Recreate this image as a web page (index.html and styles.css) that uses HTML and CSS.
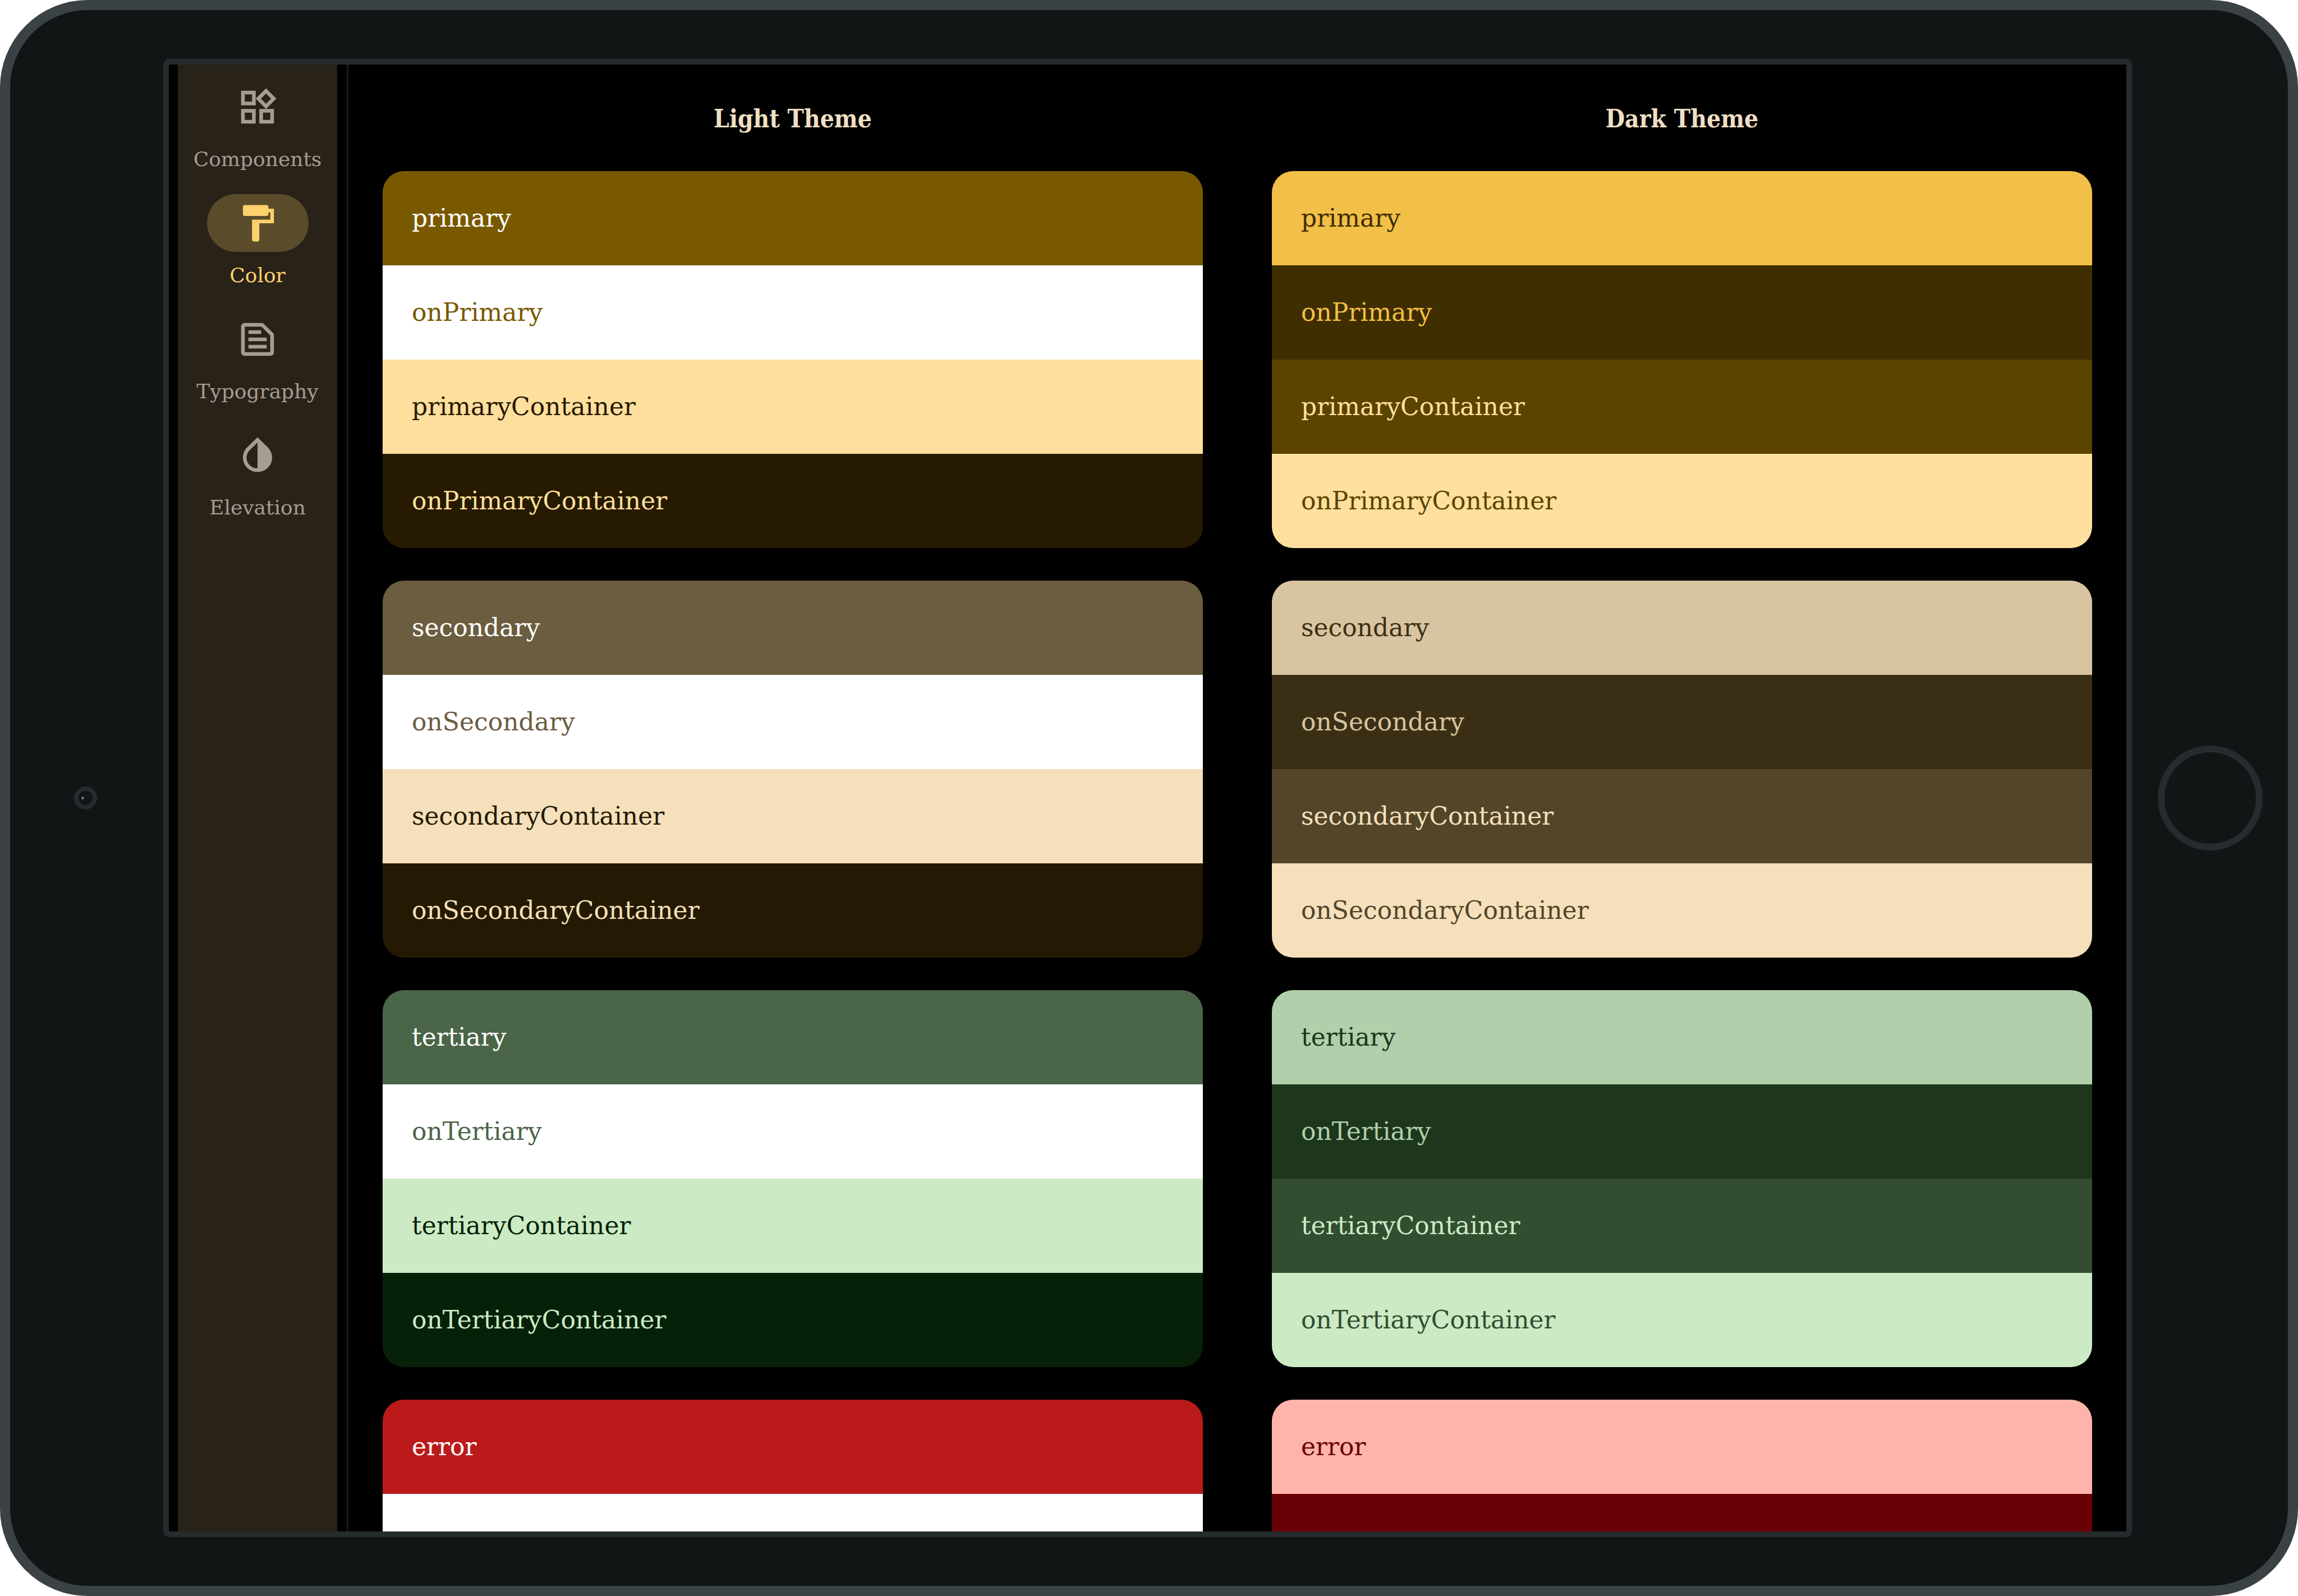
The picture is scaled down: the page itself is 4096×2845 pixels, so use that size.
FILE: index.html
```html
<!DOCTYPE html>
<html lang="en">
<head>
<meta charset="utf-8">
<meta name="viewport" content="width=device-width, initial-scale=1">
<title>Color</title>
<link rel="stylesheet" href="styles.css">
</head>
<body>
<div class="device">
  <div class="bezel bezel-left"><span class="camera"><span class="lens"></span></span></div>
  <div class="screen">
    <nav class="rail" aria-label="Main">
      <a class="rail-item" href="#components">
        <span class="indicator"><svg class="icon" viewBox="0 0 24 24" aria-hidden="true"><path d="M16.66 4.52l2.83 2.83-2.83 2.83-2.83-2.83 2.83-2.83M9 5v4H5V5h4m10 10v4h-4v-4h4M9 15v4H5v-4h4m7.66-13.31L11 7.34 16.66 13l5.66-5.66-5.66-5.65zM11 3H3v8h8V3zm10 10h-8v8h8v-8zm-10 0H3v8h8v-8z"/></svg></span>
        <span class="rail-label">Components</span>
      </a>
      <a class="rail-item active" href="#color" aria-current="page">
        <span class="indicator"><svg class="icon" viewBox="0 0 24 24" aria-hidden="true"><path d="M18 4V3c0-.55-.45-1-1-1H5c-.55 0-1 .45-1 1v4c0 .55.45 1 1 1h12c.55 0 1-.45 1-1V6h1v4H9v11c0 .55.45 1 1 1h2c.55 0 1-.45 1-1v-9h8V4h-3z"/></svg></span>
        <span class="rail-label">Color</span>
      </a>
      <a class="rail-item" href="#typography">
        <span class="indicator"><svg class="icon" viewBox="0 0 24 24" aria-hidden="true"><path fill-rule="evenodd" d="M20.41 8.41l-4.83-4.83c-.37-.37-.88-.58-1.41-.58H5c-1.1 0-2 .9-2 2v14c0 1.1.9 2 2 2h14c1.1 0 2-.9 2-2V9.83c0-.53-.21-1.04-.59-1.42zM19 19H5V5h9.17L19 9.83V19zM7 7h7v2H7zM7 11h10v2H7zM7 15h10v2H7z"/></svg></span>
        <span class="rail-label">Typography</span>
      </a>
      <a class="rail-item" href="#elevation">
        <span class="indicator"><svg class="icon" viewBox="0 0 24 24" aria-hidden="true"><path d="M12 4.81V19c-3.31 0-6-2.63-6-5.87 0-1.56.62-3.03 1.75-4.14L12 4.81M6.35 7.56C4.9 8.99 4 10.96 4 13.13 4 17.48 7.58 21 12 21s8-3.52 8-7.87c0-2.17-.9-4.14-2.35-5.57L12 2 6.35 7.56z"/></svg></span>
        <span class="rail-label">Elevation</span>
      </a>
    </nav>
    <main class="themes">
      <section class="theme light">
        <h2 class="theme-title">Light Theme</h2>
        <ul class="palette">
          <li class="swatch primary">primary</li>
          <li class="swatch on-primary">onPrimary</li>
          <li class="swatch primary-container">primaryContainer</li>
          <li class="swatch on-primary-container">onPrimaryContainer</li>
        </ul>
        <ul class="palette">
          <li class="swatch secondary">secondary</li>
          <li class="swatch on-secondary">onSecondary</li>
          <li class="swatch secondary-container">secondaryContainer</li>
          <li class="swatch on-secondary-container">onSecondaryContainer</li>
        </ul>
        <ul class="palette">
          <li class="swatch tertiary">tertiary</li>
          <li class="swatch on-tertiary">onTertiary</li>
          <li class="swatch tertiary-container">tertiaryContainer</li>
          <li class="swatch on-tertiary-container">onTertiaryContainer</li>
        </ul>
        <ul class="palette">
          <li class="swatch error">error</li>
          <li class="swatch on-error"></li>
        </ul>
      </section>
      <section class="theme dark">
        <h2 class="theme-title">Dark Theme</h2>
        <ul class="palette">
          <li class="swatch primary">primary</li>
          <li class="swatch on-primary">onPrimary</li>
          <li class="swatch primary-container">primaryContainer</li>
          <li class="swatch on-primary-container">onPrimaryContainer</li>
        </ul>
        <ul class="palette">
          <li class="swatch secondary">secondary</li>
          <li class="swatch on-secondary">onSecondary</li>
          <li class="swatch secondary-container">secondaryContainer</li>
          <li class="swatch on-secondary-container">onSecondaryContainer</li>
        </ul>
        <ul class="palette">
          <li class="swatch tertiary">tertiary</li>
          <li class="swatch on-tertiary">onTertiary</li>
          <li class="swatch tertiary-container">tertiaryContainer</li>
          <li class="swatch on-tertiary-container">onTertiaryContainer</li>
        </ul>
        <ul class="palette">
          <li class="swatch error">error</li>
          <li class="swatch on-error"></li>
        </ul>
      </section>
    </main>
  </div>
  <div class="bezel bezel-right"><button class="home" type="button" aria-label="Home"></button></div>
</div>
</body>
</html>
```
FILE: styles.css
```css
* {
  box-sizing: border-box;
}

body {
  margin: 0;
  background: #fff;
  font-family: "DejaVu Serif", serif;
}

/* Tablet frame */
.device {
  display: flex;
  height: 100vh;
  padding: 87px 0;
  border: 18px solid #3b4245;
  border-radius: 156px;
  background: #111516;
}

.bezel {
  display: flex;
  flex: none;
  align-items: center;
  justify-content: center;
}

.bezel-left {
  width: 273px;
  padding-right: 4px;
}

.bezel-right {
  width: 278px;
}

.camera {
  display: flex;
  align-items: center;
  width: 41px;
  height: 41px;
  padding-left: 5px;
  border: 8px solid #262b2d;
  border-radius: 50%;
}

.lens {
  width: 5px;
  height: 5px;
  border-radius: 50%;
  background: #6f777a;
}

.home {
  width: 187px;
  height: 187px;
  padding: 0;
  border: 12px solid #262b2d;
  border-radius: 50%;
  background: none;
}

.screen {
  display: flex;
  flex: 1;
  min-width: 0;
  overflow: hidden;
  padding-left: 16px;
  border: 10px solid #262b2d;
  border-radius: 10px;
  background: #000;
}

/* Navigation rail */
.rail {
  display: flex;
  flex: none;
  flex-direction: column;
  gap: 36px;
  width: 284px;
  padding-top: 24px;
  background: #292218;
}

.rail-item {
  display: flex;
  flex-direction: column;
  align-items: center;
  gap: 16px;
  color: #a69d92;
  text-decoration: none;
}

.active {
  color: #ffd16d;
}

.indicator {
  display: flex;
  align-items: center;
  justify-content: center;
  width: 181px;
  height: 103px;
  border-radius: 52px;
}

.active .indicator {
  background: #5a4b2a;
}

.icon {
  width: 78px;
  height: 78px;
  fill: currentColor;
}

.rail-label {
  font-size: 36px;
  line-height: 52px;
}

/* Colour schemes */
.themes {
  display: grid;
  flex: 1;
  grid-template-columns: 1fr 1fr;
  align-content: start;
  gap: 123px;
  min-width: 0;
  margin-left: 17px;
  padding: 62px 61px;
  border-left: 3px solid #1a1a1a;
}

.theme {
  display: flex;
  flex-direction: column;
  gap: 58px;
}

.theme-title {
  margin: 0;
  color: #efdfc3;
  font-family: "DejaVu Serif Condensed", "DejaVu Serif", serif;
  font-size: 44px;
  font-weight: 700;
  line-height: 70px;
  text-align: center;
}

.palette {
  overflow: hidden;
  margin: 0;
  padding: 0;
  border-radius: 38px;
  list-style: none;
}

.swatch {
  height: 168px;
  padding: 0 52px;
  font-size: 44px;
  line-height: 168px;
}

.light {
  --primary: #785900;
  --on-primary: #fff;
  --primary-container: #ffdf9e;
  --on-primary-container: #261a00;
  --secondary: #6b5d3f;
  --on-secondary: #fff;
  --secondary-container: #f5e0bb;
  --on-secondary-container: #241a04;
  --tertiary: #4a6547;
  --on-tertiary: #fff;
  --tertiary-container: #ccebc4;
  --on-tertiary-container: #072109;
  --error: #ba1a1a;
  --on-error: #fff;
}

.dark {
  --primary: #f2bf48;
  --on-primary: #3f2e00;
  --primary-container: #5b4300;
  --on-primary-container: #ffdf9e;
  --secondary: #d8c4a0;
  --on-secondary: #3a2f15;
  --secondary-container: #52452a;
  --on-secondary-container: #f5e0bb;
  --tertiary: #b0cfaa;
  --on-tertiary: #1d361c;
  --tertiary-container: #334d31;
  --on-tertiary-container: #ccebc4;
  --error: #ffb4ab;
  --on-error: #690005;
}

.primary { background: var(--primary); color: var(--on-primary); }
.on-primary { background: var(--on-primary); color: var(--primary); }
.primary-container { background: var(--primary-container); color: var(--on-primary-container); }
.on-primary-container { background: var(--on-primary-container); color: var(--primary-container); }
.secondary { background: var(--secondary); color: var(--on-secondary); }
.on-secondary { background: var(--on-secondary); color: var(--secondary); }
.secondary-container { background: var(--secondary-container); color: var(--on-secondary-container); }
.on-secondary-container { background: var(--on-secondary-container); color: var(--secondary-container); }
.tertiary { background: var(--tertiary); color: var(--on-tertiary); }
.on-tertiary { background: var(--on-tertiary); color: var(--tertiary); }
.tertiary-container { background: var(--tertiary-container); color: var(--on-tertiary-container); }
.on-tertiary-container { background: var(--on-tertiary-container); color: var(--tertiary-container); }
.error { background: var(--error); color: var(--on-error); }
.on-error { background: var(--on-error); color: var(--error); }
```
